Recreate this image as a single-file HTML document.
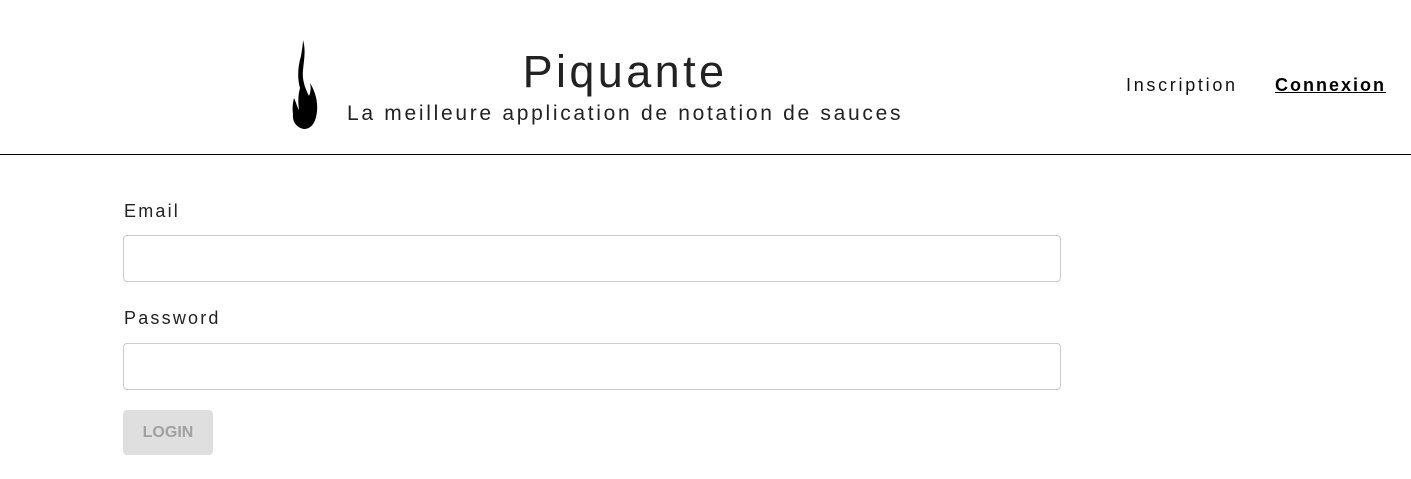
<!DOCTYPE html>
<html><head><meta charset="utf-8"><style>
body{margin:0;width:1411px;height:479px;background:#fff;font-family:"Liberation Sans",sans-serif;position:relative;overflow:hidden;color:#222}
.hdr{position:absolute;left:0;top:0;width:1411px;height:154px;border-bottom:1px solid #000}
.t{position:absolute;left:347px;width:556px;text-align:center;top:46px;font-size:45px;letter-spacing:3.4px;color:#222}
.s{position:absolute;left:347px;top:102px;font-size:21px;letter-spacing:2.7px;color:#222;white-space:nowrap}
.n1{position:absolute;left:1126px;top:75px;font-size:18px;letter-spacing:2.7px;color:#111}
.n2{position:absolute;left:1275px;top:75px;font-size:18px;letter-spacing:2px;font-weight:bold;text-decoration:underline;color:#000}
.l{position:absolute;left:124px;font-size:18px;letter-spacing:2.2px;color:#222}
.i{position:absolute;left:123px;width:936px;height:45px;border:1px solid #ccc;border-radius:4px}
.b{position:absolute;left:123px;top:410px;width:90px;height:45px;background:#dfdfdf;border-radius:4px;color:#a0a0a0;font-size:16px;font-weight:bold;text-align:center;line-height:45px}
</style></head><body>
<div class="hdr">
<svg style="position:absolute;left:288px;top:38px" width="32" height="94" viewBox="0 0 32 94">
<path d="M15 2 C18 12 16 22 15 32 C14 42 17 50 21 58 C23 53 23 49 22 45 C27 53 30 63 29 73 C28 85 23 91 16 91 C9 90 4 84 5 76 C4 70 5 64 6 60 C8 64 9 69 11 72 C10 64 10 57 12 50 C9 40 10 28 13 18 C14 12 15 6 15 2 Z" fill="#000"/>
</svg>
<div class="t">Piquante</div>
<div class="s">La meilleure application de notation de sauces</div>
<div class="n1">Inscription</div>
<div class="n2">Connexion</div>
</div>
<div class="l" style="top:201px">Email</div>
<div class="i" style="top:235px"></div>
<div class="l" style="top:308px">Password</div>
<div class="i" style="top:343px"></div>
<div class="b">LOGIN</div>
</body></html>
